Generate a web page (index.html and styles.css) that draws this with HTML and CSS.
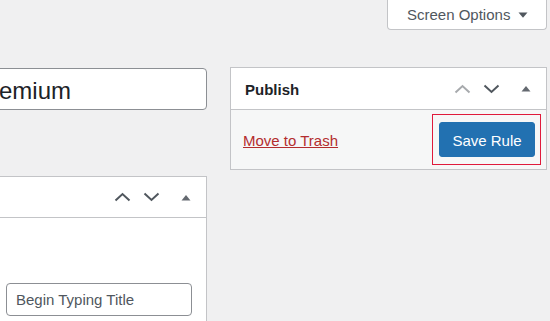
FILE: index.html
```html
<!DOCTYPE html>
<html lang="en">
<head>
    <meta charset="UTF-8">
    <title>Edit Rule</title>
    <link rel="stylesheet" href="styles.css">
</head>
<body>
<div class="screen-meta">
    <button class="screen-options">Screen Options
        <svg class="caret" width="10" height="6" viewBox="0 0 10 6"><path d="M0.5 0.5h9L5 5.8z" fill="#50575e"/></svg>
    </button>
</div>

<div class="columns">
    <div class="main-col">
        <div class="title-wrap">
            <input class="title-input" type="text" value="Premium">
        </div>

        <div class="postbox">
            <div class="postbox-header">
                <h2 class="postbox-title"></h2>
                <div class="handle-actions">
                    <span class="handle up">
                        <svg width="17" height="10" viewBox="0 0 17 10"><path d="M1.5 8.5l7-6.5 7 6.5" fill="none" stroke="currentColor" stroke-width="2"/></svg>
                    </span>
                    <span class="handle down">
                        <svg width="17" height="10" viewBox="0 0 17 10"><path d="M1.5 1.5l7 6.5 7-6.5" fill="none" stroke="currentColor" stroke-width="2"/></svg>
                    </span>
                    <span class="handle toggle">
                        <svg width="10" height="7" viewBox="0 0 10 7"><path d="M0.5 6.5h9L5 1z" fill="currentColor"/></svg>
                    </span>
                </div>
            </div>
            <div class="inside">
                <input class="search-input" type="text" placeholder="Begin Typing Title">
            </div>
        </div>
    </div>

    <div class="side-col">
        <div class="postbox publish">
            <div class="postbox-header">
                <h2 class="postbox-title">Publish</h2>
                <div class="handle-actions">
                    <span class="handle up disabled">
                        <svg width="17" height="10" viewBox="0 0 17 10"><path d="M1.5 8.5l7-6.5 7 6.5" fill="none" stroke="currentColor" stroke-width="2"/></svg>
                    </span>
                    <span class="handle down">
                        <svg width="17" height="10" viewBox="0 0 17 10"><path d="M1.5 1.5l7 6.5 7-6.5" fill="none" stroke="currentColor" stroke-width="2"/></svg>
                    </span>
                    <span class="handle toggle">
                        <svg width="10" height="7" viewBox="0 0 10 7"><path d="M0.5 6.5h9L5 1z" fill="currentColor"/></svg>
                    </span>
                </div>
            </div>
            <div class="publish-actions">
                <a class="trash-link" href="#">Move to Trash</a>
                <span class="highlight">
                    <button class="save-button">Save Rule</button>
                </span>
            </div>
        </div>
    </div>
</div>
</body>
</html>
```

FILE: styles.css
```css
html, body {
    margin: 0;
    height: 100%;
    overflow: hidden;
}

body {
    background-color: #f0f0f1;
    color: #1d2327;
    font-family: "Liberation Sans", Arial, sans-serif;
    font-size: 15px;
}

.screen-meta {
    display: flex;
    justify-content: flex-end;
    padding-right: 3px;
}

.screen-options {
    display: flex;
    align-items: center;
    gap: 8px;
    width: 160px;
    height: 30px;
    padding: 0 0 0 19px;
    border: 1px solid #c3c4c7;
    border-top: none;
    border-radius: 0 0 4px 4px;
    background-color: #fff;
    color: #50575e;
    font-family: inherit;
    font-size: 15px;
}

.caret {
    margin-top: 1px;
}

.columns {
    display: grid;
    grid-template-columns: 1fr 317px;
    column-gap: 23px;
    align-items: start;
    margin: 37px 0 0 -34px;
    padding-right: 3px;
}

.title-input {
    box-sizing: border-box;
    width: 100%;
    height: 42px;
    margin: 1px 0 0;
    padding: 3px 8px 0;
    border: 1px solid #8c8f94;
    border-radius: 4px;
    background-color: #fff;
    color: #1d2327;
    font-family: inherit;
    font-size: 24px;
}

.postbox {
    border: 1px solid #c3c4c7;
    background-color: #fff;
}

.main-col .postbox {
    margin-top: 66px;
    height: 200px;
}

.postbox-header {
    display: flex;
    align-items: center;
    justify-content: space-between;
    height: 41px;
    border-bottom: 1px solid #c3c4c7;
}

.main-col .postbox-header {
    height: 40px;
}

.postbox-title {
    margin: 0;
    padding: 2px 0 0 14px;
    font-size: 15px;
    font-weight: bold;
}

.handle-actions {
    display: flex;
    align-items: center;
    padding-right: 8px;
}

.handle {
    display: flex;
    justify-content: center;
    width: 24px;
    color: #50575e;
}

.handle.down {
    margin-left: 5px;
}

.handle.toggle {
    margin-left: 11px;
    color: #646970;
}

.handle.disabled {
    color: #a7aaad;
}

.inside {
    display: flex;
    justify-content: flex-end;
    padding: 65px 14px 0 0;
}

.search-input {
    box-sizing: border-box;
    width: 186px;
    height: 33px;
    padding: 0 9px;
    border: 1px solid #8c8f94;
    border-radius: 4px;
    background-color: #fff;
    font-family: inherit;
    font-size: 15px;
}

.search-input::placeholder {
    color: #50575e;
}

.publish-actions {
    display: flex;
    align-items: center;
    justify-content: space-between;
    padding: 4px 5px 4px 12px;
    background-color: #f6f7f7;
}

.trash-link {
    margin-top: 2px;
    color: #b32d2e;
    text-decoration: underline;
}

.highlight {
    display: block;
    padding: 7px 5px 7px 6px;
    border: 1px solid #e01a3b;
}

.save-button {
    display: block;
    width: 96px;
    height: 35px;
    padding: 2px 0 0;
    border: 1px solid #2271b1;
    border-radius: 3px;
    background-color: #2271b1;
    color: #fff;
    font-family: inherit;
    font-size: 15px;
}
```
